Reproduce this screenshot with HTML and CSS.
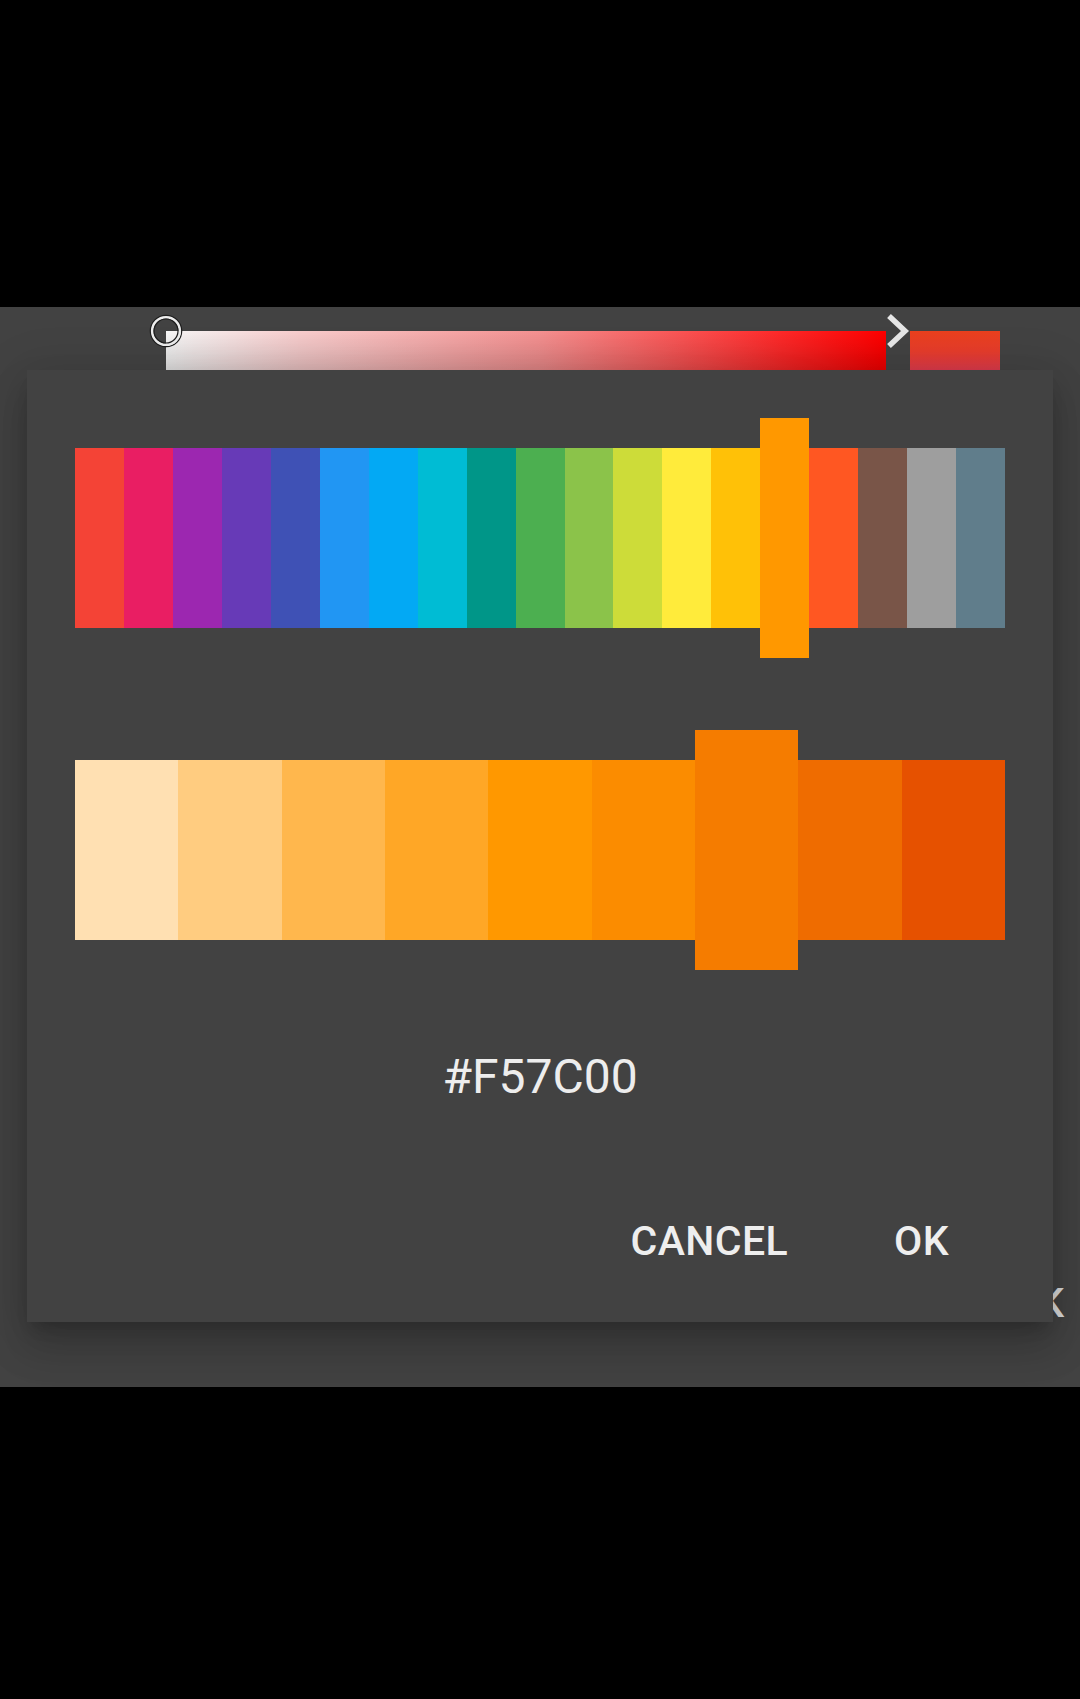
FILE: index.html
```html
<!DOCTYPE html>
<html>
<head>
<meta charset="utf-8">
<link rel="stylesheet" href="styles.css">
</head>
<body>
<div class="screen">
  <div class="top-black"></div>
  <div class="panel">
    <div class="picker-row">
      <div class="sat-bar">
        <svg class="handle" width="36" height="36" viewBox="0 0 36 36">
          <circle cx="18" cy="18" r="15.6" fill="none" stroke="#1e1e1e" stroke-width="1.4"/>
          <circle cx="18" cy="18" r="13.8" fill="none" stroke="#ececec" stroke-width="2.6"/>
          <circle cx="18" cy="18" r="12" fill="none" stroke="#1e1e1e" stroke-width="1.2"/>
        </svg>
      </div>
      <svg class="chevron" width="24" height="36" viewBox="0 0 24 36">
        <polyline points="3,3 19,18 3,33" fill="none" stroke="#e6e6e6" stroke-width="5.5" stroke-linejoin="miter" stroke-miterlimit="3"/>
      </svg>
      <div class="cur-swatch"></div>
    </div>

    <div class="dialog">
      <div class="palette">
        <div class="sw" style="background:#F44336"></div>
        <div class="sw" style="background:#E91E63"></div>
        <div class="sw" style="background:#9C27B0"></div>
        <div class="sw" style="background:#673AB7"></div>
        <div class="sw" style="background:#3F51B5"></div>
        <div class="sw" style="background:#2196F3"></div>
        <div class="sw" style="background:#03A9F4"></div>
        <div class="sw" style="background:#00BCD4"></div>
        <div class="sw" style="background:#009688"></div>
        <div class="sw" style="background:#4CAF50"></div>
        <div class="sw" style="background:#8BC34A"></div>
        <div class="sw" style="background:#CDDC39"></div>
        <div class="sw" style="background:#FFEB3B"></div>
        <div class="sw" style="background:#FFC107"></div>
        <div class="sw sel" style="background:#FF9800"></div>
        <div class="sw" style="background:#FF5722"></div>
        <div class="sw" style="background:#795548"></div>
        <div class="sw" style="background:#9E9E9E"></div>
        <div class="sw" style="background:#607D8B"></div>
      </div>
      <div class="palette shades">
        <div class="sw" style="background:#FFE0B2"></div>
        <div class="sw" style="background:#FFCC80"></div>
        <div class="sw" style="background:#FFB74D"></div>
        <div class="sw" style="background:#FFA726"></div>
        <div class="sw" style="background:#FF9800"></div>
        <div class="sw" style="background:#FB8C00"></div>
        <div class="sw sel" style="background:#F57C00"></div>
        <div class="sw" style="background:#EF6C00"></div>
        <div class="sw" style="background:#E65100"></div>
      </div>
      <div class="hex">#F57C00</div>
      <div class="actions">
        <span class="btn">CANCEL</span>
        <span class="btn">OK</span>
      </div>
    </div>
    <div class="ghost-ok">OK</div>
  </div>
</div>
</body>
</html>
```

FILE: styles.css
```css
html, body {
  margin: 0;
  padding: 0;
  background: #000;
}
body {
  width: 1080px;
  height: 1699px;
  overflow: hidden;
  font-family: Roboto, "Noto Sans", "Liberation Sans", sans-serif;
}
.screen {
  width: 1080px;
}
.top-black {
  height: 307px;
  background: #000;
}
.panel {
  position: relative;
  background: #424242;
  height: 1080px;
  overflow: hidden;
}
.picker-row {
  display: flex;
  align-items: flex-start;
  padding-top: 24px;
  height: 39px;
}
.sat-bar {
  position: relative;
  margin-left: 166px;
  width: 720px;
  height: 39px;
  background:
    linear-gradient(to bottom, rgba(0,0,0,0) 0%, rgba(0,0,0,0.12) 100%),
    linear-gradient(to right, #f6f6f6 0%, #f8cccc 19%, #f59090 52%, #ff2a2a 85%, #ff0000 100%);
}
.handle {
  position: absolute;
  left: -18px;
  top: -18px;
}
.chevron {
  display: block;
  margin-top: -18px;
  flex: none;
}
.cur-swatch {
  width: 90px;
  height: 39px;
  background: linear-gradient(to bottom, #e9401e 0%, #e63c2a 50%, #d8394a 100%);
}
.dialog {
  position: relative;
  z-index: 1;
  margin: 0 27px;
  height: 952px;
  box-sizing: border-box;
  padding: 78px 48px 0;
  background: #424242;
  box-shadow: 0 11px 15px -7px rgba(0,0,0,.2), 0 24px 38px 3px rgba(0,0,0,.14), 0 9px 46px 8px rgba(0,0,0,.12);
}
.palette {
  display: flex;
  align-items: center;
  height: 180px;
}
.palette .sw {
  flex: 1 1 0;
  height: 180px;
}
.palette .sw.sel {
  height: 240px;
}
.shades {
  margin-top: 132px;
}
.hex {
  margin-top: 109px;
  height: 56px;
  line-height: 56px;
  font-size: 48px;
  text-align: center;
  color: #ededed;
}
.actions {
  margin-top: 112px;
  display: flex;
  justify-content: flex-end;
  gap: 106px;
  padding-right: 56px;
}
.btn {
  font-size: 41px;
  line-height: 48px;
  font-weight: 500;
  letter-spacing: 0.4px;
  color: #eeeeee;
}
.ghost-ok {
  position: absolute;
  z-index: 0;
  left: 1010px;
  top: 972px;
  font-size: 41px;
  line-height: 48px;
  font-weight: 500;
  color: #dcdcdc;
}
```
